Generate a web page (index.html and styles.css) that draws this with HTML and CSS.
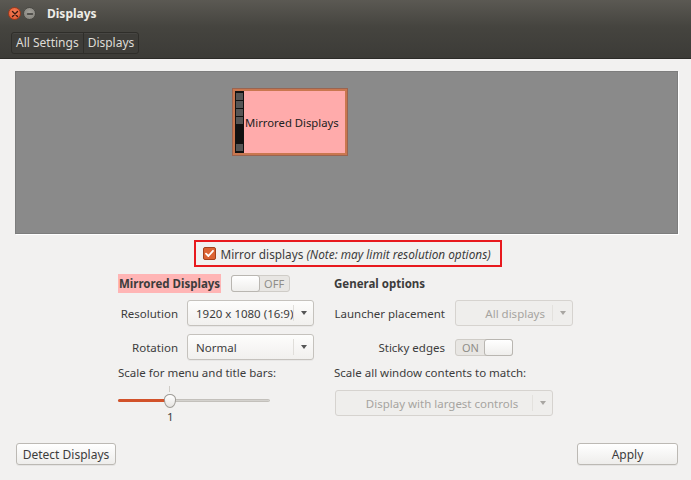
FILE: index.html
```html
<!DOCTYPE html>
<html>
<head>
<meta charset="utf-8">
<link rel="stylesheet" href="styles.css">
</head>
<body>
<div class="window">
  <div class="titlebar">
    <span class="wbtn close"><svg width="8" height="8" viewBox="0 0 8 8"><path d="M1.5 1.5L6.5 6.5M6.5 1.5L1.5 6.5" stroke="#3a1a10" stroke-width="1.4" stroke-linecap="round"/></svg></span>
    <span class="wbtn min"><svg width="8" height="8" viewBox="0 0 8 8"><path d="M1.5 4H6.5" stroke="#3a3936" stroke-width="1.4" stroke-linecap="round"/></svg></span>
    <span class="title">Displays</span>
  </div>
  <div class="toolbar">
    <div class="crumbs"><span class="crumb">All Settings</span><span class="crumb">Displays</span></div>
  </div>
  <div class="content">
    <div class="arrange">
      <div class="monitor">
        <div class="strip"><i></i><i></i><i></i><i></i><b></b><i></i></div>
        <span class="mlabel">Mirrored Displays</span>
      </div>
    </div>
    <div class="mirror-row">
      <div class="mirror-box">
        <span class="check"><svg width="11" height="11" viewBox="0 0 11 11"><path d="M2 5.6L4.4 8L9 2.8" fill="none" stroke="#fff" stroke-width="1.8" stroke-linecap="round" stroke-linejoin="round"/></svg></span>
        <span class="mtext">Mirror displays <em>(Note: may limit resolution options)</em></span>
      </div>
    </div>
    <div class="options">
      <div class="col left">
        <div class="row head">
          <span class="hl">Mirrored Displays</span>
          <span class="switch off"><span class="knob"></span><span class="stxt">OFF</span></span>
        </div>
        <div class="row r1">
          <span class="lbl l-left">Resolution</span>
          <span class="combo c-res"><span class="ctext">1920 x 1080 (16:9)</span><span class="carrow"><span class="tri"></span></span></span>
        </div>
        <div class="row r2">
          <span class="lbl l-left">Rotation</span>
          <span class="combo c-res"><span class="ctext">Normal</span><span class="carrow"><span class="tri"></span></span></span>
        </div>
        <div class="plain">Scale for menu and title bars:</div>
        <div class="slider">
          <div class="track"><div class="fill"></div><div class="thumb"></div></div>
          <div class="tick"></div>
          <div class="sval">1</div>
        </div>
      </div>
      <div class="col right">
        <div class="row head"><span class="bold">General options</span></div>
        <div class="row r1">
          <span class="lbl l-right">Launcher placement</span>
          <span class="combo disabled c-launch"><span class="ctext rt">All displays</span><span class="carrow"><span class="tri"></span></span></span>
        </div>
        <div class="row r2">
          <span class="lbl l-right">Sticky edges</span>
          <span class="switch on"><span class="stxt">ON</span><span class="knob"></span></span>
        </div>
        <div class="plain">Scale all window contents to match:</div>
        <div class="row r3">
          <span class="combo disabled c-scale"><span class="ctext ctr">Display with largest controls</span><span class="carrow"><span class="tri"></span></span></span>
        </div>
      </div>
    </div>
    <div class="footer">
      <span class="btn">Detect Displays</span>
      <span class="btn apply">Apply</span>
    </div>
  </div>
</div>
</body>
</html>
```

FILE: styles.css
```css
* { box-sizing: border-box; }
html, body { margin: 0; padding: 0; }
body {
  width: 691px; height: 480px; overflow: hidden;
  font-family: "Noto Sans", "DejaVu Sans", sans-serif;
  font-size: 11.5px; color: #3c3c3c;
  background: #f2f1f0;
  white-space: nowrap;
}
.window { width: 691px; height: 480px; display: flex; flex-direction: column; }
.titlebar {
  height: 27px; display: flex; align-items: center; padding-left: 8px;
  background: linear-gradient(#5b5953, #45443f);
}
.wbtn {
  width: 13px; height: 13px; border-radius: 50%;
  display: inline-flex; align-items: center; justify-content: center;
  margin-right: 2px;
}
.close { background: radial-gradient(circle at 50% 40%, #f7825a, #e0512a); border: 1px solid #9c3a1c; }
.min { background: radial-gradient(circle at 50% 40%, #a4a29b, #7f7d77); border: 1px solid #4a4944; }
.title { color: #efede8; font-weight: bold; font-size: 12px; margin-left: 9px; }
.toolbar {
  height: 32px; display: flex; align-items: center; padding-left: 11px;
  background: linear-gradient(#45443f, #3c3b37);
  border-bottom: 1px solid #2c2b28;
}
.crumbs {
  display: flex; border: 1px solid #2f2e2a; border-radius: 3px;
  background: #3e3d39; box-shadow: inset 0 1px 0 rgba(255,255,255,0.05);
}
.crumb { color: #dedcd6; font-size: 12px; padding: 1px 4px 2px; line-height: 17px; }
.crumb + .crumb { border-left: 1px solid #2f2e2a; }
.content { flex: 1; display: flex; flex-direction: column; padding: 12px 13px 0 15px; }
.arrange {
  height: 163px; background: #8a8a8a; position: relative;
  border: 1px solid #7d7d7d; box-shadow: 1px 1px 0 #ffffff;
}
.monitor {
  position: absolute; left: 217px; top: 17px; width: 114px; height: 66px;
  background: #ffabab; border: 2px solid #c9774f; box-shadow: 0 0 0 1px #9a6450;
  display: flex; align-items: center;
}
.strip {
  width: 9px; align-self: stretch; background: #111; display: flex; flex-direction: column;
  padding: 2px 1px; gap: 1px;
}
.strip i { display: block; height: 7px; background: #555; }
.strip b { flex: 1; }
.mlabel { color: #222; font-size: 11.3px; margin-left: 1px; }
.mirror-row { display: flex; justify-content: center; padding-top: 6px; padding-right: 10px; }
.mirror-box {
  margin-left: 12px;
  width: 308px; height: 27px; border: 2px solid #e8191e;
  display: flex; align-items: center; padding-left: 7px;
}
.check {
  width: 13px; height: 13px; border-radius: 2px; background: #dc6434; border: 1px solid #a4421d;
  display: inline-flex; align-items: center; justify-content: center; margin-right: 5px;
}
.mtext { font-size: 11.8px; color: #3c3c3c; }
.mtext em { font-style: italic; }
.options { display: flex; padding-left: 103px; margin-top: 5px; }
.col { display: flex; flex-direction: column; }
.left { width: 216px; }
.right { width: 260px; }
.row { display: flex; align-items: center; }
.head { height: 20px; margin-top: 1px; }
.hl { background: #ffb5b5; font-weight: bold; padding: 0 1px; line-height: 19px; }
.bold { font-weight: bold; }
.switch {
  display: inline-flex; align-items: center; height: 17px; border: 1px solid #cfccc7; border-radius: 3px;
  background: #e8e6e3; font-size: 11px; color: #8f8d89;
}
.switch.off { width: 59px; margin-left: 10px; }
.switch.on { width: 58px; }
.knob {
  width: 29px; height: 17px; margin: -1px; border: 1px solid #b9b6b1; border-radius: 3px;
  background: linear-gradient(#ffffff, #efeeec);
}
.stxt { flex: 1; text-align: center; }
.r1 { margin-top: 7px; height: 26px; }
.r2 { margin-top: 8px; height: 26px; }
.lbl { display: inline-block; text-align: right; }
.l-left { width: 60px; margin-right: 9px; }
.l-right { width: 111px; margin-right: 10px; }
.combo {
  display: inline-flex; align-items: center; height: 26px; border: 1px solid #c5c2bd; border-radius: 3px;
  background: linear-gradient(#fdfdfc, #f1f0ee); color: #3c3c3c;
  box-shadow: 0 1px 0 rgba(0,0,0,0.04);
}
.c-res { width: 127px; }
.c-launch { width: 118px; }
.c-scale { width: 218px; }
.ctext { flex: 1; padding-left: 8px; white-space: nowrap; }
.ctext.rt { text-align: right; padding-right: 7px; }
.ctext.ctr { text-align: center; padding-left: 16px; }
.carrow {
  width: 20px; height: 16px; border-left: 1px solid #e0deda;
  display: flex; align-items: center; justify-content: center;
}
.tri { width: 0; height: 0; border-left: 3.5px solid transparent; border-right: 3.5px solid transparent; border-top: 4px solid #555; }
.combo.disabled { background: #efeeec; border-color: #d6d3cf; color: #a6a4a0; box-shadow: none; }
.combo.disabled .tri { border-top-color: #a8a6a2; }
.combo.disabled .carrow { border-left-color: #e3e1dd; }
.plain { margin-top: 5px; height: 16px; line-height: 16px; }
.slider { position: relative; height: 52px; width: 152px; }
.track {
  position: absolute; left: 0; right: 0; top: 18px; height: 3px; border-radius: 2px;
  background: #d4d2ce; border: 1px solid #c3c0bb;
}
.fill { position: absolute; left: -1px; top: -1px; height: 3px; width: 50px; background: #d2522a; border-radius: 2px; }
.thumb {
  position: absolute; left: 45px; top: -6px; width: 12px; height: 14px;
  background: linear-gradient(#ffffff, #e6e4e1); border: 1px solid #9f9c97;
  border-radius: 6px 6px 6px 6px / 5px 5px 8px 8px;
}
.tick { position: absolute; left: 51px; top: 5px; width: 1px; height: 6px; background: #cfccc7; }
.sval { position: absolute; left: 49px; top: 28px; font-size: 11.5px; }
.r3 { margin-top: 9px; height: 26px; margin-left: 1px; }
.footer {
  display: flex; justify-content: space-between; margin-top: auto; padding: 0 0 15px 1px;
}
.btn {
  display: inline-flex; align-items: center; justify-content: center;
  height: 22px; border: 1px solid #bcb9b4; border-radius: 3px;
  background: linear-gradient(#ffffff, #eeedeb); color: #3c3c3c; font-size: 12px;
  box-shadow: 0 1px 0 rgba(0,0,0,0.05);
}
.btn { width: 100px; }
.apply { width: 101px; }
```
